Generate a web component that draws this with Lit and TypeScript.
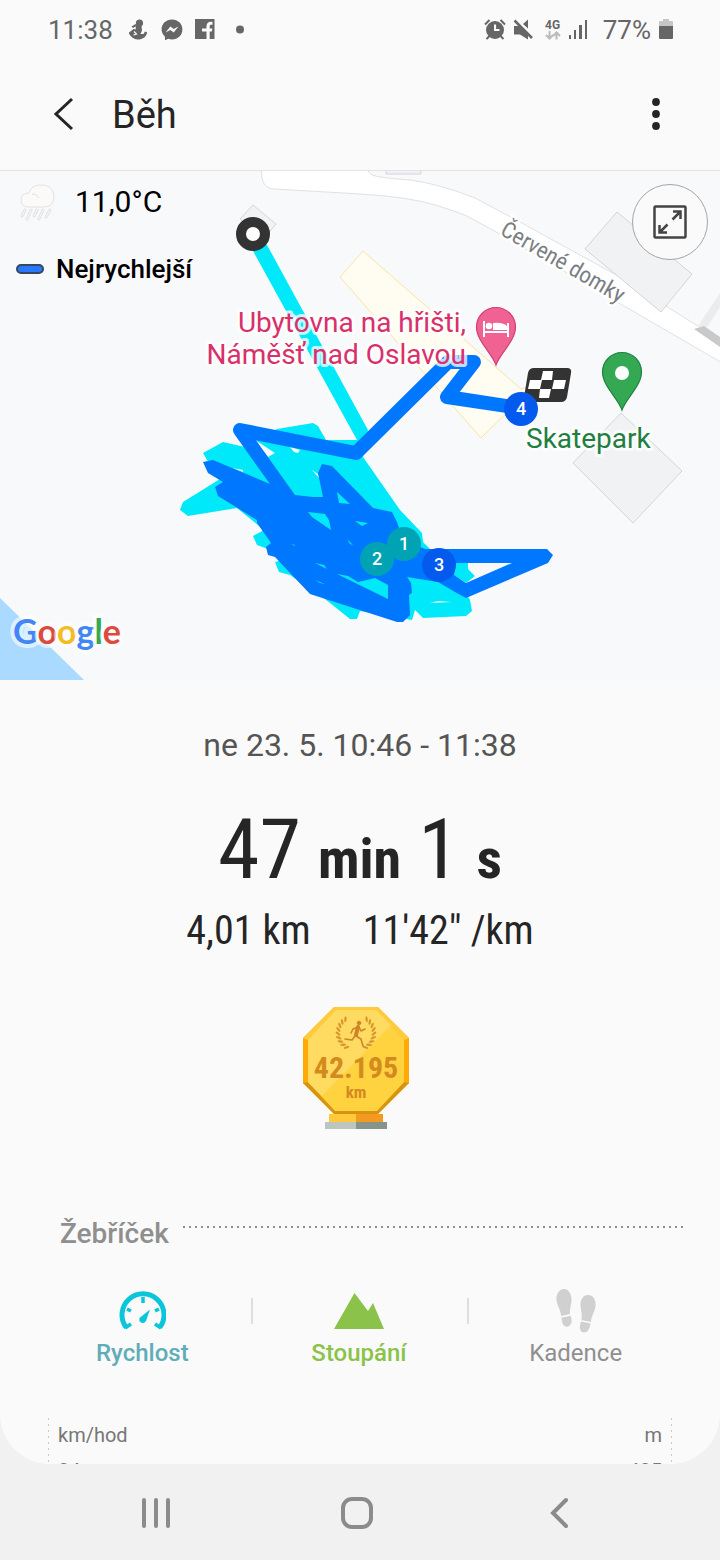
import { LitElement, html, svg, css } from "lit";
import { customElement, state } from "lit/decorators.js";

@customElement("status-bar")
class StatusBar extends LitElement {
  static styles = css`
    :host { display: block; }
    .bar { display: flex; justify-content: space-between; align-items: center; height: 60px; padding: 0 47px 0 48px; color: #666; font-size: 26px; line-height: 32px; }
    .group { display: flex; align-items: center; }
    .time { margin-right: 16px; }
    .level { margin: 0 8px 0 14px; }
    svg { display: block; fill: currentColor; }
    .notes { gap: 12px; }
  `;
  render() {
    return html`<div class="bar">
      <div class="group">
        <span class="time">11:38</span>
        <div class="group notes">
          <svg width="20" height="22" viewBox="0 0 20 22"><circle cx="10.500" cy="4" r="3.600"/><path d="M2.500 7.500L7.500 4.500l1 2-4.500 2.500z"/><path d="M7 7h5.500l.5 4.500-1.500 3.500h3l1.500-2.500 2 .7c0 4-4 7.300-9.500 7.300C4.500 20.500 1.500 17.500-.5 14L4.500 10l2 .5z"/><path d="M5 12.500l2.500 2.500-3 1" fill="none" stroke="#fafafa" stroke-width="1.200"/></svg>
          <svg width="22" height="22" viewBox="0 0 22 22"><path fill-rule="evenodd" d="M11 .5C5 .5.600 4.800.600 10.300c0 3 1.200 5.500 3.300 7.300l.1 3.600 3.300-1.400c1.100.4 2.400.6 3.700.6 6 0 10.400-4.400 10.400-10C21.400 4.800 17 .5 11 .5zM4.600 13.500l4.800-6 3.300 2.400 4.700-2.500-4.700 6.100-3.400-2.400z"/></svg>
          <svg width="20" height="22" viewBox="0 0 20 22"><path d="M0 0h19.500v20H0z"/><path fill="#fafafa" d="M11.500 20v-7.500H7v-3h4.500V7.500c0-3 1.500-4.800 4.300-4.800h1.700v3h-1.300c-1 0-1.500.5-1.500 1.500v2.300h2.700l-.5 3h-2.200V20z"/></svg>
          <svg width="28" height="22" viewBox="0 0 28 22"><circle cx="13" cy="10.500" r="4"/></svg>
        </div>
      </div>
      <div class="group">
        <svg width="22" height="22" viewBox="1 0 22 22" overflow="visible"><path fill-rule="evenodd" d="M11 2a9 9 0 1 1 0 18 9 9 0 0 1 0-18zM10 5.500V12h5.500v-2h-3.400V5.500z"/><path d="M1 5.500L5.500 1M21 5.500L16.500 1M2.500 20l3-3M19.500 20l-3-3" stroke="currentColor" stroke-width="2"/></svg>
        <svg width="32" height="22" viewBox="-11 0 32 22"><path d="M5 5L10 .500v9z"/><path d="M-3.500 1.500L14 19" stroke="#fafafa" stroke-width="5"/><path d="M-3.500 1.500L14 19" stroke="currentColor" stroke-width="2.500"/><path d="M-4 7h5L10 16v4.500L2 15.500h-6z"/></svg>
        <svg width="30" height="26" viewBox="-11 0 30 26"><text x="-5" y="12" font-size="12" font-weight="700" font-family="Roboto, sans-serif">4G</text><path d="M-.5 14v7M-4 18l3.500 3.500L3 18M6.500 22.500v-7M3 19l3.500-3.500L10 19" fill="none" stroke="#bbb" stroke-width="2"/></svg>
        <svg width="20" height="22" viewBox="0 0 20 22"><path d="M0 16h2v4H0zM5 11h2v9H5zM10 6h3v14h-3zM16 1h2v19h-2z"/></svg>
        <span class="level">77%</span>
        <svg width="14" height="22" viewBox="0 0 14 22"><path fill="#c6c6c6" d="M1 2h3V0h6v2h3q1 0 1 1v5H0V3q0-1 1-1z"/><path d="M0 7h14v12q0 1-1 1H1q-1 0-1-1z"/></svg>
      </div>
    </div>`;
  }
}

@customElement("route-map")
class RouteMap extends LitElement {
  static styles = css`
    :host { display: block; position: relative; border-top: 1px solid #e2e3e4; background: #f8f9fb; }
    .canvas { display: block; width: 100%; height: auto; }
    text { font-family: Roboto, sans-serif; }
    .building { fill: #f1f2f3; stroke: #d3d5d8; stroke-width: 1; }
    .road { fill: #fff; stroke: #dfe1e3; stroke-width: 1; }
    .field { fill: #fffcf1; stroke: #fae3a4; stroke-width: 1; }
    .slow { fill: #00e9fa; }
    .fast { fill: #0077ff; }
    .gap { fill: #f8f9fb; }
    .track { fill: none; stroke: #0077ff; stroke-width: 14; stroke-linejoin: round; }
    .place { font-size: 28px; paint-order: stroke; stroke: #fff; stroke-opacity: .75; stroke-width: 6px; stroke-linejoin: round; }
    .pink { fill: #d9306a; }
    .green { fill: #1e8040; }
    .street { font-family: "Roboto Condensed", Roboto, sans-serif; font-size: 23px; fill: #7b7f83; paint-order: stroke; stroke: #fff; stroke-width: 5px; }
    .badge { font-size: 18px; font-weight: 500; fill: #fff; text-anchor: middle; }
    .google { font-family: Lato, sans-serif; font-size: 34px; font-weight: 700; paint-order: stroke; stroke: #fff; stroke-opacity: .6; stroke-width: 8px; stroke-linejoin: round; }
    .info { position: absolute; left: 16px; top: 8px; color: #000; }
    .row { display: flex; align-items: center; }
    .weather { gap: 16px; font-size: 30px; line-height: 46px; }
    .legend { gap: 12px; margin-top: 24px; font-size: 26px; font-weight: 500; line-height: 40px; }
    .swatch { width: 24px; height: 6px; border: 2px solid #37475f; border-radius: 5px; background: #2979ff; }
    .expand { position: absolute; right: 12px; top: 13px; width: 76px; height: 76px; padding: 0; border: 1px solid #a5a5a5; border-radius: 50%; background: #fafafa; display: grid; place-items: center; }
  `;

  private pin(x: number, y: number, fill: string, edge: string) {
    return svg`<path d="M${x} ${y + 38}C${x - 4} ${y + 26} ${x - 19.5} ${y + 14} ${x - 19.5} ${y}a19.500 19.500 0 0 1 39 0C${x + 19.5} ${y + 14} ${x + 4} ${y + 26} ${x} ${y + 38}z" fill=${fill} stroke=${edge} stroke-width="1.200"/>`;
  }

  private badge(n: number, x: number, y: number, fill: string) {
    return svg`<circle cx=${x} cy=${y} r="17" fill=${fill}/><text class="badge" x=${x} y=${y + 6}>${n}</text>`;
  }

  render() {
    return html`
      <svg class="canvas" viewBox="0 171 720 509" role="img" aria-label="Mapa trasy">
        <path fill="#aadaff" d="M0 598L84 680H0z"/>
        <path class="building" d="M386 165h35v9h-35zM253 205l23 19-14 17-22-22zM621 413l61 58-49 52-60-60z"/>
        <path class="road" d="M262 165C260 182 265 189 275 189L360 194Q410 197 435 205Q455 211 467 216L498 233L643 317L724 364V341L693 323L620 277L520 222L475 198Q440 184 410 180Q380 178 372 175L362 165z"/>
        <path class="building" d="M617 212L585 249L661 312L692 274z"/>
        <path fill="#ececec" d="M720 293L698 326L706 329L720 307z"/>
        <path fill="#c9c9c9" d="M694 329L704 326L720 337V347z"/>
        <path class="field" d="M363 251L340 277L481 438L535 385L521 389z"/>

        <path class="slow" d="M261 234L368 430L363 457L400 510L422 533L423 542L430 549L468 556L475 578L462 586L470 600L472 611L466 616L423 618L415 610L412 620L360 611L357 619L350 619L325 599L290 575L279 572L275 562L283 560L268 549L257 545L253 536L264 530L237 508L188 516L180 510L183 502L220 479L207 460L203 453L223 442L245 447L277 429L313 423L318 426L326 440L357 440L247 240z"/>
        <path class="gap" d="M255 440L275 453L268 457zM290 447L300 450L298 453L294 452zM312 470L318 474L319 478zM232 468L243 470V472zM430 603L438 601L451 602z"/>

        <path class="fast" d="M203 462L213 460L270 484L295 495L313 497L323 497L318 473L322 464L332 466L373 508L392 512L397 522L403 540L425 549H547L553 555L548 563L466 598L455 592L438 582L407 577L411 583L412 593L409 595L410 615L403 622L397 622L310 594L275 557L268 555L266 547L271 543L257 523V520L218 496L215 487L223 482L208 473z"/>
        <path class="gap" d="M457 563H512L466 583L456 576z"/>
        <path class="slow" d="M456 563H468V569L475 576L466 583L454 575z"/>
        <path class="slow" d="M308 512L325 514L329 520L331 530L312 517zM337 492L350 504L339 503zM355 521L368 523L362 526zM347 539L353 545L350 544zM315 563L324 565L327 569zM315 580L325 584L320 583zM291 544L295 545V546zM337 574L348 576L358 582L367 580L375 578L388 585V599z"/>
        <path class="track" d="M290 500L240 430L356 453L448 362H474L447 397L520 408"/>

        <path fill="#333" d="M534 368h33q5 0 4 5l-4 24q-1 5-6 5h-33q-5 0-4-5l4-24q1-5 6-5z"/>
        <path fill="#fff" d="M543 371h10l-1 9h-11zM530 380h12l-2 9h-12zM554 380h12l-2 9h-12zM540 389h11l-2 9h-10z"/>
        <circle cx="253" cy="234" r="12" fill="#fff" stroke="#333" stroke-width="10"/>

        <text class="place pink" text-anchor="end" x="466" y="332">Ubytovna na hřišti,</text>
        <text class="place pink" text-anchor="end" x="466" y="364">Náměšť nad Oslavou</text>
        <text class="place green" x="526" y="448">Skatepark</text>
        <text class="street" transform="translate(499 234) rotate(30)">Červené domky</text>

        ${this.pin(496, 327, "#f06292", "#d23f74")}
        <path fill="#fff" d="M483 321h2v10h22v-8h2v14h-2v-4h-22v4h-2z"/>
        <path fill="#fff" d="M493 330v-7q9-1 14 3v4z"/>
        <circle cx="489" cy="326" r="3.300" fill="#fff"/>
        ${this.pin(622, 372, "#34a853", "#1e8440")}
        <circle cx="622" cy="373" r="7" fill="#fff"/>

        ${this.badge(1, 404, 544, "#00a3b4")}
        ${this.badge(2, 377, 559, "#00a3b4")}
        ${this.badge(3, 439, 565, "#055aee")}
        ${this.badge(4, 521, 409, "#055aee")}

        <text class="google" x="13" y="644"><tspan fill="#4285f4">G</tspan><tspan fill="#dc4a3d">o</tspan><tspan fill="#f4bc1c">o</tspan><tspan fill="#4285f4">g</tspan><tspan fill="#34a853">l</tspan><tspan fill="#dc4a3d">e</tspan></text>
      </svg>
      <div class="info">
        <div class="row weather">
          <svg width="43" height="40" viewBox="0 0 43 40" fill="#fcfaf8" stroke="#e2e2e2"><path d="M13 25q-8 0-8-7 0-7 8-7Q15 4 23 3q14-1 15 11 0 11-10 11z"/><path d="M16 12q4-1 7 4" fill="none"/><path d="M9 28l-3 6M15 28l-4 9M21 28l-3 6M27 28l-4 9M34 28l-4 7" stroke-width="3" stroke-linecap="round"/><path d="M9 28l-3 6M15 28l-4 9M21 28l-3 6M27 28l-4 9M34 28l-4 7" stroke="#fafafa" stroke-width="1" stroke-linecap="round"/></svg>
          <span>11,0°C</span>
        </div>
        <div class="row legend"><span class="swatch"></span><span>Nejrychlejší</span></div>
      </div>
      <button class="expand" aria-label="Zvětšit mapu">
        <svg width="34" height="34" viewBox="0 0 34 34" fill="none" stroke="#444" stroke-width="2.500"><rect x="1.500" y="1.500" width="31" height="31" rx="1"/><path d="M19.500 14.500L27 7M20 6.500h7.500V14M14.500 19.500L7 27M14 27.500H6.500V20"/></svg>
      </button>`;
  }
}

@customElement("marathon-medal")
class MarathonMedal extends LitElement {
  static styles = css`
    :host { display: block; }
    svg { display: block; margin: 0 auto; }
    text { font-weight: 700; fill: #d58a1f; text-anchor: middle; }
    .num { font-family: "Roboto Condensed", Roboto, sans-serif; font-size: 30px; }
    .unit { font-family: "Roboto Condensed", Roboto, sans-serif; font-size: 17px; }
  `;
  render() {
    const leaves = [];
    for (let i = 0; i < 9; i++) {
      const deg = 122 + i * 14;
      const a = (deg * Math.PI) / 180;
      for (const side of [1, -1]) {
        const x = 54 + side * Math.cos(a) * 18;
        const y = 26 + Math.sin(a) * 17;
        leaves.push(svg`<ellipse cx=${x} cy=${y} rx="3" ry="1.200" transform=${`rotate(${side * (deg - 140)} ${x} ${y})`}/>`);
      }
    }
    return html`<svg width="108" height="124" viewBox="0 0 108 124" role="img" aria-label="42.195 km">
      <path fill="#fbbf24" d="M32 0h44l31 31v45l-31 31H32L1 76V31z"/>
      <path fill="#ffa904" d="M1 31l5 2v42l-5 2zM107 31l-5 2v42l5 2z"/>
      <path fill="#d89410" d="M1 76l5-1 27 28h42l27-28 5 1-31 31H32z"/>
      <path fill="#ffcb3c" d="M32 0h44l31 31-5 2-28-29H34L6 33l-5-2z"/>
      <path fill="#ffd23f" d="M34 3h40l28 30v42l-27 29H33L6 75V33z"/>
      <path fill="#ffdb62" d="M34 3h40l15 15L20 89 6 75V33z"/>
      <g fill="#d9962e">${leaves}</g>
      <g fill="none" stroke="#d0842a" stroke-linecap="round" stroke-linejoin="round"><circle cx="57" cy="16" r="1.800" fill="#d0842a"/><path stroke-width="4" d="M56 20l-2 8"/><path stroke-width="1.600" d="M56 20l-5 2-2 4M57 20l2 4 4-2M53 29l-3 4-7-1M54 29l5 3 2 7"/></g>
      <text class="num" x="54" y="71">42.195</text>
      <text class="unit" x="54" y="91">km</text>
      <path fill="#ffc93a" d="M27 107h27v8H27z"/><path fill="#f49a22" d="M54 107h27v8H54z"/>
      <path fill="#bcc5bf" d="M23 115h31v7H23z"/><path fill="#87948c" d="M54 115h31v7H54z"/>
    </svg>`;
  }
}

@customElement("app-root")
class AppRoot extends LitElement {
  @state() private tab = "Rychlost";

  static styles = css`
    :host { display: flex; flex-direction: column; height: 100vh; background: #f1f1f1; font-family: Roboto, sans-serif; }
    button { font: inherit; background: none; border: 0; padding: 0; margin: 0; color: inherit; }
    svg { display: block; }
    .screen { flex: 1; min-height: 0; display: flex; flex-direction: column; overflow: hidden; background: #fafafa; border-radius: 0 0 50px 50px; }
    .screen > * { flex: none; }
    .appbar { display: flex; align-items: center; height: 110px; box-sizing: border-box; padding: 0 40px; color: #252525; }
    .icon { width: 48px; height: 48px; display: grid; place-items: center; }
    .appbar h1 { flex: 1; margin: 0 0 0 24px; font-size: 38px; font-weight: 400; line-height: 48px; }
    .summary { display: flex; flex-direction: column; align-items: center; color: #252525; padding-top: 45px; }
    .date { font-size: 32px; line-height: 40px; color: #555; }
    .duration { display: flex; align-items: baseline; gap: 17px; margin-top: 37px; font-family: "Roboto Condensed", Roboto, sans-serif; line-height: 96px; }
    .big { font-size: 84px; }
    .unit { font-size: 56px; font-weight: 700; }
    .facts { display: flex; gap: 52px; font-family: "Roboto Condensed", Roboto, sans-serif; font-size: 40px; line-height: 48px; }
    marathon-medal { margin: 52px 8px 0 0; }
    .heading { display: flex; align-items: flex-start; gap: 14px; margin-top: 85px; padding: 0 36px 0 60px; }
    .heading h2 { margin: 0; font-size: 28px; font-weight: 500; line-height: 36px; color: #8f8f8f; }
    .dots { flex: 1; height: 2px; margin-top: 10px; background: repeating-linear-gradient(90deg, #8f8f8f 0 2px, transparent 2px 6px); }
    .tabs { display: grid; grid-template-columns: repeat(3, 1fr); padding: 0 36px 0 34px; margin-top: 34px; }
    .tab { display: flex; flex-direction: column; align-items: center; font-size: 24px; line-height: 32px; gap: 3px; }
    .tab + .tab { background: linear-gradient(#dedede, #dedede) no-repeat 0 12px / 2px 26px; }
    .speed { color: #5fadb9; font-weight: 500; }
    .climb { color: #8bc34a; font-weight: 500; }
    .cadence { color: #8f8f8f; }
    .chart { display: flex; justify-content: space-between; height: 200px; margin: 49px 48px 0; padding: 3px 10px 0; color: #777; font-size: 20px; line-height: 28px; background: repeating-linear-gradient(#c9c9c9 0 2px, transparent 2px 6px) no-repeat 0 0 / 1px 100%, repeating-linear-gradient(#c9c9c9 0 2px, transparent 2px 6px) no-repeat 100% 0 / 1px 100%; }
    .axis { display: flex; flex-direction: column; gap: 8px; }
    .right { text-align: right; }
    .nav { flex: none; display: grid; grid-template-columns: repeat(3, 1fr); height: 96px; padding: 0 60px 0 55px; color: #8b8b8b; }
    .nav button { display: grid; place-items: center; }
  `;

  private tabButton(name: string, cls: string, icon: unknown) {
    return html`<button class="tab ${cls}" role="tab" aria-selected=${this.tab === name} @click=${() => (this.tab = name)}>${icon}<span>${name}</span></button>`;
  }

  render() {
    return html`
      <div class="screen">
        <status-bar></status-bar>
        <header class="appbar">
          <button class="icon" aria-label="Zpět"><svg width="26" height="36" viewBox="0 0 26 36" fill="none" stroke="#252525" stroke-width="3"><path d="M21 2L5 17l16 15"/></svg></button>
          <h1>Běh</h1>
          <button class="icon" aria-label="Další možnosti"><svg width="8" height="36" viewBox="0 0 8 36" fill="#252525"><circle cx="4" cy="5" r="3.900"/><circle cx="4" cy="17" r="3.900"/><circle cx="4" cy="29" r="3.900"/></svg></button>
        </header>
        <route-map></route-map>
        <section class="summary">
          <div class="date">ne 23. 5. 10:46 - 11:38</div>
          <div class="duration"><span class="big">47</span><span class="unit">min</span><span class="big">1</span><span class="unit">s</span></div>
          <div class="facts"><span>4,01 km</span><span>11'42" /km</span></div>
          <marathon-medal></marathon-medal>
        </section>
        <div class="heading"><h2>Žebříček</h2><span class="dots"></span></div>
        <div class="tabs" role="tablist">
          ${this.tabButton("Rychlost", "speed", html`<svg width="48" height="48" viewBox="-1 -2 48 48" fill="none" stroke="#0bc6da" stroke-width="5"><path d="M7.300 39.600A21 21 0 1 1 40.700 39.600"/><path stroke-width="3.500" d="M24 9v6M8 21l4 2M40 21l-4 2M6 40l6-4M42 40l-6-4"/><path fill="#0bc6da" stroke="none" d="M31 21.500L27 33q-2 3-5 1.500-3-2-1-5z"/></svg>`)}
          ${this.tabButton("Stoupání", "climb", html`<svg width="50" height="48" viewBox="0 0 50 48" fill="#8bc34a"><path d="M0 43L20.500 7 34 25l5-8 11 26z"/></svg>`)}
          ${this.tabButton("Kadence", "cadence", html`<svg width="42" height="48" viewBox="0 0 42 48" fill="#d0d0d0"><path d="M9 3c4-.5 7 4 7.500 10 .3 5-2 8-1.500 15L6 30c0-6-4-10-4.500-16C1 8 4 3.500 9 3z"/><path d="M6.500 31.800l9-2c2 5 1.500 9-2.500 10.700-4 1-6-2-6.500-8.700z"/><path d="M33.500 9c-5-.5-8 4-8 10 0 5 2 8 1 15l9.500 2c0-6 4-10 4.500-16 .5-6-2-10.500-7-11z"/><path d="M26 35.500l9.500 2c-1 6-3 9-7 9-4-1-4.500-5-2.500-11z"/></svg>`)}
        </div>
        <div class="chart">
          <div class="axis"><span>km/hod</span><span>24</span></div>
          <div class="axis right"><span>m</span><span>425</span></div>
        </div>
      </div>
      <nav class="nav">
        <button aria-label="Poslední aplikace"><svg width="30" height="32" viewBox="0 0 30 32" stroke="currentColor" stroke-width="4" stroke-linecap="round"><path d="M3 4v26M15 4v26M27 4v26"/></svg></button>
        <button aria-label="Domů"><svg width="32" height="34" viewBox="0 0 32 34" fill="none" stroke="currentColor" stroke-width="4"><rect x="2" y="4" width="28" height="28" rx="9"/></svg></button>
        <button aria-label="Zpět"><svg width="20" height="34" viewBox="0 0 20 34" fill="none" stroke="currentColor" stroke-width="4" stroke-linecap="round"><path d="M17 5L4 18l13 13"/></svg></button>
      </nav>`;
  }
}
